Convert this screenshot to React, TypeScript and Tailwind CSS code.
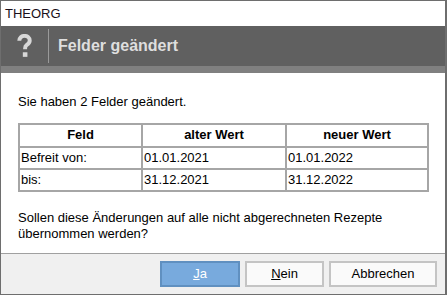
import React from 'react';

const rows = [
  { feld: 'Befreit von:', alt: '01.01.2021', neu: '01.01.2022' },
  { feld: 'bis:', alt: '31.12.2021', neu: '31.12.2022' },
];

export default function App() {
  return (
    <div
      className="w-[447px] h-[296px] bg-white overflow-hidden"
      style={{ fontFamily: '"Liberation Sans", Arial, sans-serif' }}
    >
      <div className="w-[447px] h-[295px] border border-[#6e6e6e] border-r-2 flex flex-col">
        {/* title bar */}
        <div className="h-[25px] bg-white flex items-center pl-[4px] text-[13px] text-[#1a0f1a]">
          THEORG
        </div>

        {/* header */}
        <div className="h-[40px] bg-[#606060] flex items-center">
          <div className="w-[47px] flex justify-center">
            <svg width="15" height="24" viewBox="0 0 14 23">
              <path
                d="M2 6.5 C2 3.5 4.2 1.8 7 1.8 C10 1.8 12 3.6 12 6.2 C12 8.6 10.4 9.6 9 10.6 C8 11.3 7.6 12 7.6 13.6 L7.6 14.5"
                fill="none"
                stroke="#d8d8d8"
                strokeWidth="3.8"
              />
              <rect x="5.4" y="17.5" width="4.4" height="4.4" fill="#d8d8d8" />
            </svg>
          </div>
          <div className="w-px h-[34px] bg-[#9a9a9a]" />
          <div className="pl-[9px] text-[16px] font-bold text-[#dedede]">Felder geändert</div>
        </div>
        <div className="h-[7px] bg-[#808080]" />

        {/* body */}
        <div className="flex-1 bg-white px-[17px] pt-[19px] text-[13px] text-black">
          <div>Sie haben 2 Felder geändert.</div>
          <table className="mt-[11px] w-[411px] border-collapse border-2 border-[#a6a6a6] text-[13px]">
            <thead>
              <tr className="h-[23px]">
                <th className="w-[123px] border-2 border-[#a6a6a6] font-bold text-center">Feld</th>
                <th className="w-[144px] border-2 border-[#a6a6a6] font-bold text-center">alter Wert</th>
                <th className="border-2 border-[#a6a6a6] font-bold text-center">neuer Wert</th>
              </tr>
            </thead>
            <tbody>
              {rows.map((r) => (
                <tr key={r.feld} className="h-[22px]">
                  <td className="border-2 border-[#a6a6a6] px-[1px] font-normal">{r.feld}</td>
                  <td className="border-2 border-[#a6a6a6] px-[1px]">{r.alt}</td>
                  <td className="border-2 border-[#a6a6a6] px-[1px]">{r.neu}</td>
                </tr>
              ))}
            </tbody>
          </table>
          <div className="mt-[18px] leading-[16px]">
            Sollen diese Änderungen auf alle nicht abgerechneten Rezepte
            <br />
            übernommen werden?
          </div>
        </div>

        {/* footer */}
        <div className="h-[41px] bg-[#f0f0f0] border-t border-[#a0a0a0] flex items-center justify-end gap-[5px] pr-[8px] text-[13px]">
          <button className="w-[80px] h-[26px] bg-[#78aadd] border-2 border-[#6090c0] text-white">
            <span className="underline">J</span>a
          </button>
          <button className="w-[79px] h-[26px] bg-[#fafafa] border-2 border-[#c4c4c4] text-black">
            <span className="underline">N</span>ein
          </button>
          <button className="w-[108px] h-[26px] bg-[#fafafa] border-2 border-[#c4c4c4] text-black">
            Abbrechen
          </button>
        </div>
      </div>
    </div>
  );
}
